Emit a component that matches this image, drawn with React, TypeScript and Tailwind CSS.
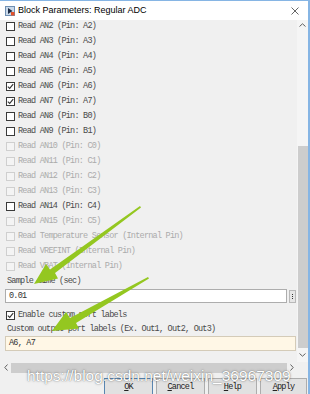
import type { ReactNode } from 'react';

type Row = { label: string; checked?: boolean; disabled?: boolean };

const rows: Row[] = [
  { label: 'Read AN2 (Pin: A2)' },
  { label: 'Read AN3 (Pin: A3)' },
  { label: 'Read AN4 (Pin: A4)' },
  { label: 'Read AN5 (Pin: A5)' },
  { label: 'Read AN6 (Pin: A6)', checked: true },
  { label: 'Read AN7 (Pin: A7)', checked: true },
  { label: 'Read AN8 (Pin: B0)' },
  { label: 'Read AN9 (Pin: B1)' },
  { label: 'Read AN10 (Pin: C0)', disabled: true },
  { label: 'Read AN11 (Pin: C1)', disabled: true },
  { label: 'Read AN12 (Pin: C2)', disabled: true },
  { label: 'Read AN13 (Pin: C3)', disabled: true },
  { label: 'Read AN14 (Pin: C4)' },
  { label: 'Read AN15 (Pin: C5)', disabled: true },
  { label: 'Read Temperature Sensor (Internal Pin)', disabled: true },
  { label: 'Read VREFINT (Internal Pin)', disabled: true },
  { label: 'Read VBAT (Internal Pin)', disabled: true },
];

function CheckBox({ checked, disabled }: { checked?: boolean; disabled?: boolean }) {
  return (
    <span
      className={
        'flex h-[9px] w-[9px] shrink-0 items-center justify-center border ' +
        (disabled ? 'border-[#cfcfcf] bg-[#f4f4f4]' : 'border-[#3a3a3a] bg-white')
      }
    >
      {checked && (
        <svg width="7" height="7" viewBox="0 0 7 7">
          <path d="M0.8 3.6 L2.7 5.4 L6.2 1.2" fill="none" stroke="#333" strokeWidth="1.1" />
        </svg>
      )}
    </span>
  );
}

function CheckRow({ label, checked, disabled }: Row) {
  return (
    <div className="flex h-[15px] items-center gap-[3px] pl-[6px]">
      <CheckBox checked={checked} disabled={disabled} />
      <span className={disabled ? 'text-[#ababab]' : 'text-[#4a4a4a]'}>{label}</span>
    </div>
  );
}

function Btn({ first, rest, primary, w }: { first: string; rest: string; primary?: boolean; w: string }) {
  return (
    <div
      className={
        'flex h-[18px] items-center justify-center border bg-[#e1e1e1] text-[#222] ' +
        w +
        (primary ? ' border-[#5a86b0]' : ' border-[#adadad]')
      }
    >
      <span className="underline">{first}</span>
      {rest}
    </div>
  );
}

function Arrow({ d }: { d: string }): ReactNode {
  return <path d={d} fill="#94c720" />;
}

export default function App() {
  return (
    <div className="relative h-[394px] w-[310px] overflow-hidden border-t border-r-2 border-[#86b5e4] bg-[#f0f0f0] font-['Liberation_Mono',monospace] text-[8.5px] tracking-[-0.76px]">
      {/* title bar */}
      <div className="flex h-[19px] items-center bg-white pl-[5px] pr-[9px] font-['Liberation_Sans',Arial,sans-serif] text-[9px] tracking-normal text-black">
        <svg width="10" height="10" viewBox="0 0 10 10">
          <rect x="0.5" y="0.5" width="9" height="9" fill="#c9d9ea" stroke="#6f8fb2" />
          <path d="M3 2 L7.5 5 L3 8 Z" fill="#1b2a44" />
          <rect x="6" y="6" width="3.5" height="3.5" fill="#e2512a" />
        </svg>
        <span className="ml-[3px] flex-1">Block Parameters: Regular ADC</span>
        <svg width="8" height="8" viewBox="0 0 8 8">
          <path d="M0.5 0.5 L7.5 7.5 M7.5 0.5 L0.5 7.5" stroke="#555" strokeWidth="0.9" />
        </svg>
      </div>

      {/* body */}
      <div className="flex h-[342px]">
        <div className="flex-1 overflow-hidden">
          <div className="-mt-[1px] flex flex-col">
            {rows.map((r) => (
              <CheckRow key={r.label} {...r} />
            ))}
            <div className="flex h-[15px] items-center pl-[7px] text-[#4a4a4a]">Sample time (sec)</div>
            <div className="flex items-center gap-[2px] pl-[5px] pr-[1px]">
              <div className="flex h-[14px] flex-1 items-center border border-[#adadad] bg-white pl-[3px] text-[#333]">0.01</div>
              <div className="flex h-[13px] w-[7px] flex-col items-center justify-center gap-[1px] border border-[#b8b8b8] bg-[#e6e6e6]">
                <span className="h-[1px] w-[1px] bg-[#333]" />
                <span className="h-[1px] w-[1px] bg-[#333]" />
                <span className="h-[1px] w-[1px] bg-[#333]" />
              </div>
            </div>
            <div className="mt-[5px]">
              <CheckRow label="Enable custom port labels" checked />
            </div>
            <div className="flex h-[13px] items-center pl-[7px] text-[#4a4a4a]">
              Custom output port labels (Ex. Out1, Out2, Out3)
            </div>
            <div className="pl-[5px] pr-[1px]">
              <div className="flex h-[15px] items-center border border-[#d4cbb8] bg-[#fff7e6] pl-[3px] text-[#333]">A6, A7</div>
            </div>
          </div>
        </div>
        {/* vertical scrollbar */}
        <div className="flex w-[11px] flex-col items-center bg-[#f5f5f5]">
          <div className="flex h-[10px] items-center justify-center">
            <svg width="7" height="4" viewBox="0 0 7 4">
              <path d="M0.5 3.5 L3.5 0.8 L6.5 3.5" fill="none" stroke="#606060" />
            </svg>
          </div>
          <div className="mt-[116px] h-[202px] w-[10px] bg-[#cdcdcd]" />
          <div className="flex flex-1 items-center justify-center">
            <svg width="7" height="4" viewBox="0 0 7 4">
              <path d="M0.5 0.5 L3.5 3.2 L6.5 0.5" fill="none" stroke="#606060" />
            </svg>
          </div>
        </div>
      </div>

      {/* horizontal scrollbar */}
      <div className="flex h-[11px] items-center pr-[11px]">
        <div className="flex w-[11px] items-center justify-center">
          <svg width="4" height="7" viewBox="0 0 4 7">
            <path d="M3.5 0.5 L0.8 3.5 L3.5 6.5" fill="none" stroke="#606060" />
          </svg>
        </div>
        <div className="h-[10px] flex-1 bg-[#cdcdcd]" />
        <div className="flex w-[10px] items-center justify-center">
          <svg width="4" height="7" viewBox="0 0 4 7">
            <path d="M0.5 0.5 L3.2 3.5 L0.5 6.5" fill="none" stroke="#606060" />
          </svg>
        </div>
      </div>

      {/* buttons */}
      <div className="mt-[5px] flex justify-end gap-[3px] pr-[1px]">
        <Btn first="O" rest="K" primary w="w-[49px]" />
        <Btn first="C" rest="ancel" w="w-[49px]" />
        <Btn first="H" rest="elp" w="w-[49px]" />
        <Btn first="A" rest="pply" w="w-[47px]" />
      </div>

      {/* annotation arrows */}
      <svg className="pointer-events-none absolute left-0 top-0" width="310" height="394">
        <Arrow d="M140 205 L141 206.5 L55 272 L58 277.5 L34 283 L46 263 L50 268.5 Z" />
        <Arrow d="M148 276 L149 277.5 L76 322 L79 327.5 L52 330 L66 311 L70 317 Z" />
      </svg>

      {/* watermark */}
      <div className="pointer-events-none absolute left-[27px] top-[363px] font-['Liberation_Sans',Arial,sans-serif] text-[15.5px] tracking-normal text-white [text-shadow:0_0_1px_rgba(0,0,0,0.55),0_0_3px_rgba(0,0,0,0.3)]">
        https://blog.csdn.net/weixin_36967309
      </div>
    </div>
  );
}
